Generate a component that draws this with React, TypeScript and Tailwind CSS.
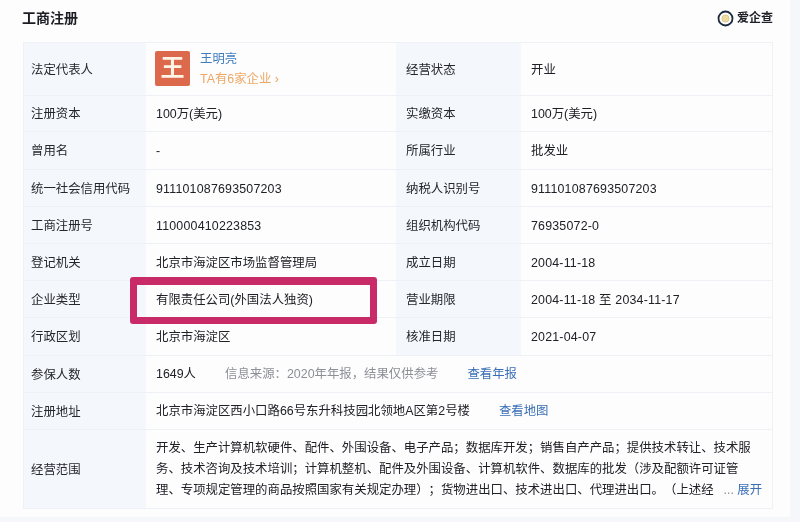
import React from "react";

const FONT = "font-['Liberation_Sans','Noto_Sans_CJK_SC',sans-serif]";

function Label({ children, right }: { children: React.ReactNode; right?: boolean }) {
  return (
    <div className={`flex items-center bg-[#f4f7fc] border-b border-[#edf0f6] pt-[2px] text-[12.4px] text-[#26272e] ${right ? "pl-[10px]" : "pl-[7px]"}`}>
      {children}
    </div>
  );
}

function Value({ children, last }: { children: string; last?: boolean }) {
  const numeric = /^[\d\- 至]+$/.test(children);
  return (
    <div className={`flex items-center border-b border-[#eef1f6] pl-[10px] pt-[2px] text-[12.4px] text-[#202127] whitespace-nowrap overflow-hidden ${last ? "border-r" : ""} ${numeric ? "tracking-[0.2px]" : ""}`}>
      {children}
    </div>
  );
}

const rows: [string, string, string, string][] = [
  ["注册资本", "100万(美元)", "实缴资本", "100万(美元)"],
  ["曾用名", "-", "所属行业", "批发业"],
  ["统一社会信用代码", "911101087693507203", "纳税人识别号", "911101087693507203"],
  ["工商注册号", "110000410223853", "组织机构代码", "76935072-0"],
  ["登记机关", "北京市海淀区市场监督管理局", "成立日期", "2004-11-18"],
  ["企业类型", "有限责任公司(外国法人独资)", "营业期限", "2004-11-18 至 2034-11-17"],
  ["行政区划", "北京市海淀区", "核准日期", "2021-04-07"],
];

export default function App() {
  return (
    <div className={`${FONT} w-[800px] h-[522px] bg-[#f6f7fa] overflow-hidden`}>
      <div className="relative w-[790px] h-[517px] bg-[#fdfdfe] px-[23px] blur-[0.55px]">
        <div className="flex h-[42px] w-[750px] items-center justify-between pb-1.5">
          <h1 className="-ml-px text-[14px] font-bold text-[#1c1d23]">工商注册</h1>
          <div className="flex items-center gap-[3px] text-[12px] font-bold text-[#1f2027]">
            <svg width="17" height="17" viewBox="0 0 17 17" fill="none">
              <circle cx="8.5" cy="8.5" r="7" stroke="#1d2a3c" strokeWidth="1.8" />
              <circle cx="8.5" cy="8.5" r="3.6" fill="#ecdca0" stroke="#d8c27c" strokeWidth="0.8" />
            </svg>
            爱企查
          </div>
        </div>

        <div className="grid w-[750px] grid-cols-[122px_250px_125px_252px] grid-rows-[53px_36px_38px_37px_37px_37px_37px_38px_37px_37px_79px] border-t border-l border-[#eef1f6]">
          <Label>法定代表人</Label>
          <div className="flex items-center gap-[10px] border-b border-[#eef1f6] pl-[9px]">
            <div className="mb-[2px] flex h-[35px] w-[35px] items-center justify-center rounded-[2px] bg-[#dc694b] text-[24px] font-bold text-[#fff3e6]">王</div>
            <div className="flex flex-col gap-[6px]">
              <span className="text-[12.4px] leading-[14px] text-[#3f7cc0]">王明亮</span>
              <span className="text-[12.4px] leading-[14px] text-[#eda765]">TA有6家企业 ›</span>
            </div>
          </div>
          <Label right>经营状态</Label>
          <Value last>开业</Value>

          {rows.map((r) => (
            <React.Fragment key={r[0]}>
              <Label>{r[0]}</Label>
              <Value>{r[1]}</Value>
              <Label right>{r[2]}</Label>
              <Value last>{r[3]}</Value>
            </React.Fragment>
          ))}

          <Label>参保人数</Label>
          <div className="col-span-3 flex items-center border-b border-r border-[#eef1f6] pl-[10px] text-[12.4px] text-[#202127]">
            <span className="w-[69px]">1649人</span>
            <span className="text-[#8d8f97]">信息来源：2020年年报，结果仅供参考</span>
            <span className="ml-[29px] text-[#3a6fb5]">查看年报</span>
          </div>

          <Label>注册地址</Label>
          <div className="col-span-3 flex items-center border-b border-r border-[#eef1f6] pl-[10px] pt-[1px] text-[12.4px] text-[#202127]">
            <span>北京市海淀区西小口路66号东升科技园北领地A区第2号楼</span>
            <span className="ml-[29px] text-[#3a6fb5]">查看地图</span>
          </div>

          <Label>经营范围</Label>
          <div className="col-span-3 flex flex-col justify-center border-b border-r border-[#eef1f6] pl-[10px] pt-px text-[12.4px] leading-[21px] text-[#202127] whitespace-nowrap [text-spacing-trim:space-all]">
            <p>开发、生产计算机软硬件、配件、外围设备、电子产品；数据库开发；销售自产产品；提供技术转让、技术服</p>
            <p>务、技术咨询及技术培训；计算机整机、配件及外围设备、计算机软件、数据库的批发（涉及配额许可证管</p>
            <p>
              理、专项规定管理的商品按照国家有关规定办理）；货物进出口、技术进出口、代理进出口。（上述经
              <span className="ml-[10px] text-[#8d8f97]">...</span>
              <span className="text-[#3a6fb5]"> 展开</span>
            </p>
          </div>
        </div>

        <div className="absolute left-[130px] top-[277px] h-[47px] w-[247px] rounded-[3px] border-[7px] border-t-[8px] border-[#c92a68]" />
      </div>
    </div>
  );
}
